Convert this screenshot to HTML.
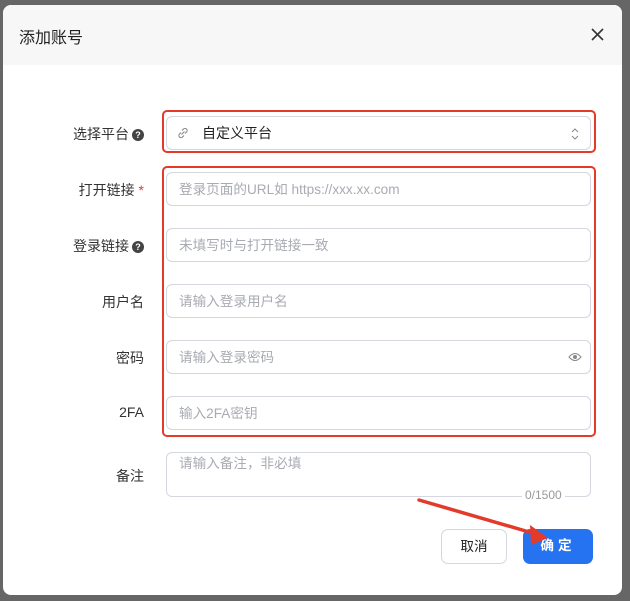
<html><head><style>
body{margin:0;width:630px;height:601px;background:#666;font-family:"Liberation Sans","Noto Sans CJK SC",sans-serif;position:relative;overflow:hidden}
.dlg{position:absolute;left:3px;top:5px;width:619px;height:590px;background:#fff;border-radius:8px;overflow:hidden}
.hd{height:60px;background:#f7f7f7;position:relative}
.hd span{position:absolute;left:16px;top:19px;font-size:16px;color:#222}
.lbl{position:absolute;right:486px;font-size:14px;color:#333;text-align:right;white-space:nowrap}
.q{display:inline-block;width:12px;height:12px;border-radius:50%;background:#444;color:#fff;font-size:9px;line-height:12px;text-align:center;vertical-align:1px;margin-left:3px;font-weight:bold}
.in{position:absolute;left:166px;width:425px;height:34px;border:1px solid #d4d7dd;border-radius:6px;box-sizing:border-box;font-size:13.6px;color:#a8abb2;line-height:33px;padding-left:12px}
.red{position:absolute;border:2px solid #e33a2a;border-radius:5px;box-sizing:border-box}
.btn{position:absolute;top:529px;height:35px;border-radius:7px;box-sizing:border-box;font-size:13.6px;text-align:center;line-height:33px}
</style></head><body>
<div class="dlg"><div class="hd"><span>添加账号</span>
<svg style="position:absolute;left:588px;top:23px" width="13" height="13"><path d="M1 1L12 12M12 1L1 12" stroke="#333" stroke-width="1.6"/></svg></div></div>
<div class="lbl" style="top:124px">选择平台<span class="q">?</span></div>
<div class="lbl" style="top:180px">打开链接 <span style="color:#e33">*</span></div>
<div class="lbl" style="top:236px">登录链接<span class="q">?</span></div>
<div class="lbl" style="top:292px">用户名</div>
<div class="lbl" style="top:348px">密码</div>
<div class="lbl" style="top:404px">2FA</div>
<div class="lbl" style="top:466px">备注</div>
<div class="in" style="top:116px;color:#222;padding-left:35px;font-size:14px">自定义平台
<svg style="position:absolute;left:10px;top:10px" width="12" height="12" viewBox="0 0 12 12"><path d="M5 3.5L6.5 2a2 2 0 013 3L8 6.5M7 8.5L5.5 10a2 2 0 01-3-3L4 5.5M4.5 7.5l3-3" stroke="#888" fill="none" stroke-width="1.1"/></svg>
<svg style="position:absolute;left:404px;top:11px" width="8" height="12"><path d="M1 4L4 1L7 4M1 8L4 11L7 8" stroke="#888" fill="none"/></svg></div>
<div class="in" style="top:172px">登录页面的URL如 https://xxx.xx.com</div>
<div class="in" style="top:228px">未填写时与打开链接一致</div>
<div class="in" style="top:284px">请输入登录用户名</div>
<div class="in" style="top:340px">请输入登录密码
<svg style="position:absolute;left:401px;top:11px" width="14" height="10"><path d="M1 5Q7 -2 13 5Q7 12 1 5Z" stroke="#888" fill="none"/><circle cx="7" cy="5" r="2" fill="#888"/></svg></div>
<div class="in" style="top:396px">输入2FA密钥</div>
<div class="in" style="top:452px;height:45px;line-height:22px">请输入备注，非必填</div>
<div style="position:absolute;left:522px;top:488px;background:#fff;padding:0 3px;font-size:12px;color:#999">0/1500</div>
<div class="red" style="left:162px;top:110px;width:434px;height:43px"></div>
<div class="red" style="left:162px;top:166px;width:434px;height:271px"></div>
<div class="btn" style="left:441px;width:66px;border:1px solid #d4d7dd;color:#222">取消</div>
<div class="btn" style="left:523px;width:70px;background:#2673f2;color:#fff;font-weight:bold;letter-spacing:4px">确定</div>
<svg style="position:absolute;left:0;top:0" width="630" height="601"><path d="M419 500L536 534" stroke="#e33a2a" stroke-width="3.5" stroke-linecap="round"/><path d="M548 538L530 525L531 545Z" fill="#e33a2a"/></svg>
</body></html>
